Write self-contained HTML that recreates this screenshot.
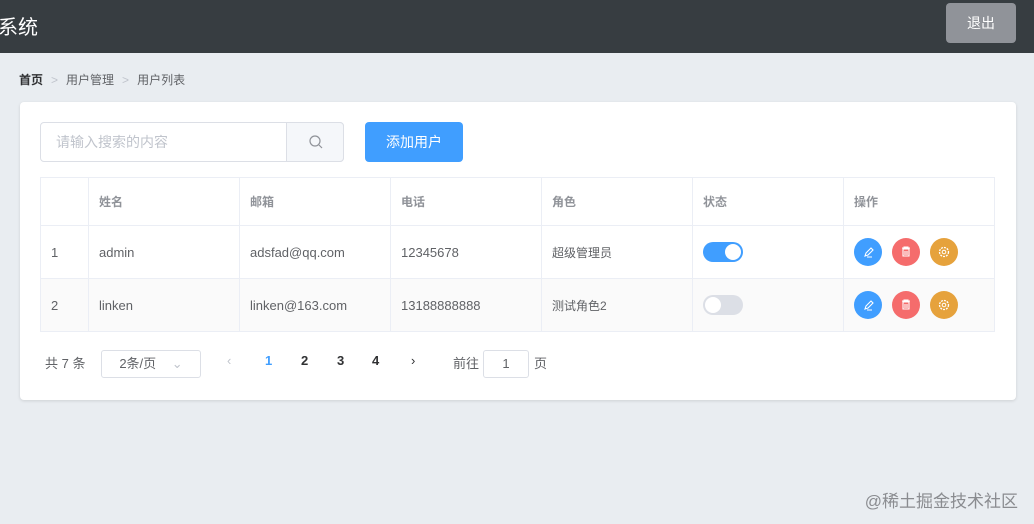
<!DOCTYPE html>
<html><head><meta charset="utf-8"><style>
*{box-sizing:border-box;margin:0;padding:0}
body{width:1034px;height:524px;background:#e9edf1;font-family:"Liberation Sans","Noto Sans CJK SC",sans-serif;position:relative;overflow:hidden;color:#606266}
.hd{position:absolute;left:0;top:0;width:1034px;height:53px;background:#373d41}
.hd .t{position:absolute;left:-2px;top:11px;color:#fff;font-size:20px}
.hd .b{position:absolute;left:946px;top:3px;width:70px;height:40px;background:#909399;border-radius:4px;color:#fff;font-size:14px;text-align:center;line-height:40px}
.bc{position:absolute;left:19px;top:71px;font-size:12px;color:#606266}
.bc b{color:#303133}
.bc i{font-style:normal;color:#c0c4cc;margin:0 8px}
.card{position:absolute;left:20px;top:102px;width:996px;height:298px;background:#fff;border-radius:4px;box-shadow:0 1px 3px rgba(0,0,0,.12)}
.in{position:absolute;left:20px;top:20px;width:304px;height:40px;border:1px solid #dcdfe6;border-radius:4px;font-size:14px;color:#c0c4cc;line-height:38px;padding-left:15px}
.sb{position:absolute;left:245px;top:-1px;width:58px;height:40px;background:#f5f7fa;border:1px solid #dcdfe6;border-radius:0 4px 4px 0}
.add{position:absolute;left:345px;top:20px;width:98px;height:40px;background:#409eff;border-radius:4px;color:#fff;font-size:14px;text-align:center;line-height:40px}
table{position:absolute;left:20px;top:75px;width:955px;border-collapse:collapse;font-size:13px}
td{border:1px solid #ebeef5;padding-left:10px;color:#606266}
tr.h td{height:48px;font-weight:bold;color:#909399;font-size:12px}
tr.r td{height:53px}
tr.s td{background:#fafafa}
.sw{display:inline-block;width:40px;height:20px;border-radius:10px;background:#409eff;position:relative;vertical-align:middle}
.sw:after{content:"";position:absolute;top:2px;left:22px;width:16px;height:16px;border-radius:50%;background:#fff}
.sw.off{background:#dcdfe6}.sw.off:after{left:2px}
.c{display:inline-block;width:28px;height:28px;border-radius:50%;margin-right:10px;vertical-align:middle}
.c svg{display:block}
.pg{position:absolute;left:25px;top:248px;font-size:13px;color:#606266}
.pg span{position:absolute;white-space:nowrap}
.box{border:1px solid #dcdfe6;border-radius:3px;height:28px;line-height:26px;text-align:center}
.wm{position:absolute;right:16px;top:487px;font-size:17px;color:#8a8c90}
</style></head><body>
<div class="hd"><div class="t">系统</div><div class="b">退出</div></div>
<div class="bc"><b>首页</b><i>&gt;</i>用户管理<i>&gt;</i>用户列表</div>
<div class="card">
<div class="in">请输入搜索的内容<div class="sb"><svg width="58" height="38"><circle cx="28" cy="18" r="5" fill="none" stroke="#909399" stroke-width="1.2"/><line x1="32" y1="22" x2="35" y2="25" stroke="#909399" stroke-width="1.2"/></svg></div></div>
<div class="add">添加用户</div>
<table>
<tr class="h"><td style="width:48px"></td><td style="width:151px">姓名</td><td style="width:151px">邮箱</td><td style="width:151px">电话</td><td style="width:151px">角色</td><td style="width:151px">状态</td><td>操作</td></tr>
<tr class="r"><td>1</td><td>admin</td><td>adsfad@qq.com</td><td>12345678</td><td style="font-size:12px">超级管理员</td><td><span class="sw"></span></td><td>
<span class="c" style="background:#409eff"><svg width="28" height="28"><path d="M11 18l1-3 5-5 2 2-5 5z M13 19h5" fill="none" stroke="#fff" stroke-width="1.1"/></svg></span><span class="c" style="background:#f56c6c"><svg width="28" height="28"><path d="M10 10h8 M12 10v-1h4v1 M11 11h6v7h-6z M13 13v4 M15 13v4" fill="none" stroke="#fff" stroke-width="1.1"/></svg></span><span class="c" style="background:#e6a23c"><svg width="28" height="28"><circle cx="14" cy="14" r="4.5" fill="none" stroke="#fff" stroke-width="1.3" stroke-dasharray="2 1"/><circle cx="14" cy="14" r="1.8" fill="none" stroke="#fff"/></svg></span></td></tr>
<tr class="r s"><td>2</td><td>linken</td><td>linken@163.com</td><td>13188888888</td><td style="font-size:12px">测试角色2</td><td><span class="sw off"></span></td><td>
<span class="c" style="background:#409eff"><svg width="28" height="28"><path d="M11 18l1-3 5-5 2 2-5 5z M13 19h5" fill="none" stroke="#fff" stroke-width="1.1"/></svg></span><span class="c" style="background:#f56c6c"><svg width="28" height="28"><path d="M10 10h8 M12 10v-1h4v1 M11 11h6v7h-6z M13 13v4 M15 13v4" fill="none" stroke="#fff" stroke-width="1.1"/></svg></span><span class="c" style="background:#e6a23c"><svg width="28" height="28"><circle cx="14" cy="14" r="4.5" fill="none" stroke="#fff" stroke-width="1.3" stroke-dasharray="2 1"/><circle cx="14" cy="14" r="1.8" fill="none" stroke="#fff"/></svg></span></td></tr>
</table>
<div class="pg">
<span style="left:0;top:3px">共 7 条</span>
<span class="box" style="left:56px;top:0;width:100px">2条/页 <span style="position:static;color:#c0c4cc;margin-left:12px">⌄</span></span>
<span style="left:182px;top:3px;color:#c0c4cc">‹</span>
<span style="left:220px;top:3px;color:#409eff;font-weight:bold">1</span>
<span style="left:256px;top:3px;font-weight:bold;color:#303133">2</span>
<span style="left:292px;top:3px;font-weight:bold;color:#303133">3</span>
<span style="left:327px;top:3px;font-weight:bold;color:#303133">4</span>
<span style="left:366px;top:3px;color:#303133">›</span>
<span style="left:408px;top:3px">前往</span>
<span class="box" style="left:438px;top:0;width:46px">1</span>
<span style="left:489px;top:3px">页</span>
</div>
</div>
<div class="wm">@稀土掘金技术社区</div>
</body></html>
